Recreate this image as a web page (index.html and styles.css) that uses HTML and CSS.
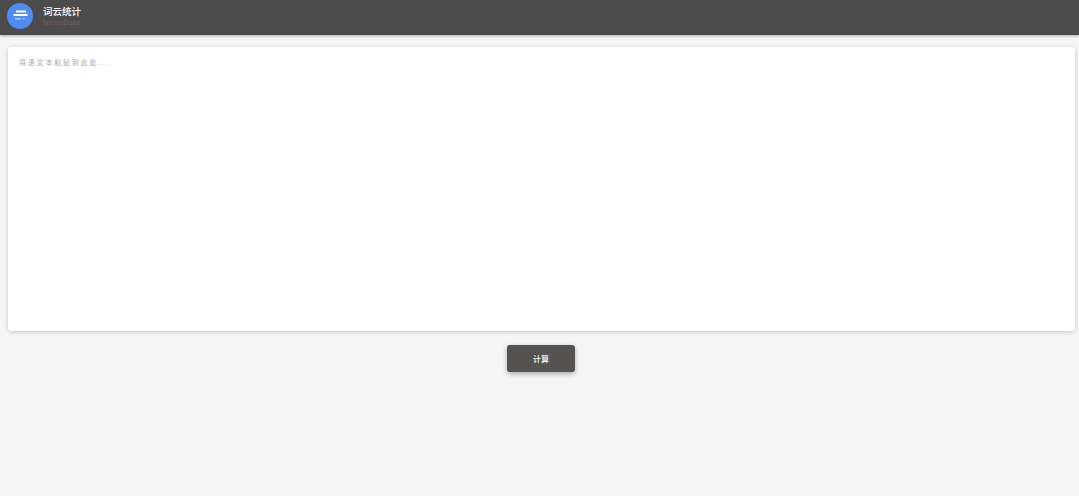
FILE: index.html
```html
<!DOCTYPE html>
<html lang="zh">
<head>
  <meta charset="UTF-8" />
  <title>词云统计</title>
  <link rel="stylesheet" href="styles.css">
</head>
<body>

<header class="app-bar">
  <svg class="logo" width="26" height="26" viewBox="0 0 26 26">
    <circle cx="13" cy="13" r="13" fill="#4f8df5"/>
    <rect x="9" y="7.5" width="10" height="2" fill="#fff"/>
    <rect x="6.5" y="11" width="14" height="2" fill="#fff"/>
    <rect x="8" y="15" width="6" height="1.5" fill="#a9c6f9"/>
    <rect x="15" y="15" width="3" height="1.5" fill="#86aef7"/>
  </svg>
  <div class="brand">
    <div class="brand-title">词云统计</div>
    <div class="brand-sub">NlccoData</div>
  </div>
</header>

<main class="container">
  <div class="paper">
    <textarea class="input" placeholder="将语文本粘贴到此处..."></textarea>
  </div>
  <div class="actions">
    <button class="btn">计算</button>
  </div>
</main>

</body>
</html>
```

FILE: styles.css
```css
* {
  box-sizing: border-box;
}
html, body {
  height: 100%;
}
body {
  margin: 0;
  background-color: #f5f5f5;
  font-family: "Roboto", "Noto Sans CJK SC", sans-serif;
  overflow: hidden;
}
.app-bar {
  display: flex;
  align-items: flex-start;
  height: 35px;
  padding: 3px 7px 0;
  background-color: #4b4b4b;
  box-shadow: 0 1px 3px rgba(0,0,0,0.3);
}
.logo {
  flex: none;
}
.brand {
  margin-left: 10px;
  padding-top: 2px;
}
.brand-title {
  color: #fff;
  font-size: 9.5px;
  font-weight: 500;
  line-height: 13px;
}
.brand-sub {
  color: #6f5f5f;
  font-size: 8px;
  line-height: 9px;
}
.container {
  padding: 12px 4px 0 8px;
}
.paper {
  height: 284px;
  background: #fff;
  border-radius: 3px;
  box-shadow: 0 1px 4px rgba(0,0,0,0.2);
}
.input {
  display: block;
  width: 100%;
  height: 100%;
  padding: 11px 11px;
  border: none;
  outline: none;
  resize: none;
  background: transparent;
  font-family: inherit;
  font-size: 7px;
  letter-spacing: 1.8px;
  line-height: 11px;
}
.input::placeholder {
  color: #a8a8a8;
}
.actions {
  display: flex;
  justify-content: center;
  margin-top: 14px;
  padding-right: 1px;
}
.btn {
  width: 68px;
  height: 27px;
  border: none;
  border-radius: 3px;
  background-color: #545350;
  color: #fff;
  font-family: inherit;
  font-size: 8px;
  font-weight: 500;
  box-shadow: 0 2px 5px rgba(0,0,0,0.3);
}
```
